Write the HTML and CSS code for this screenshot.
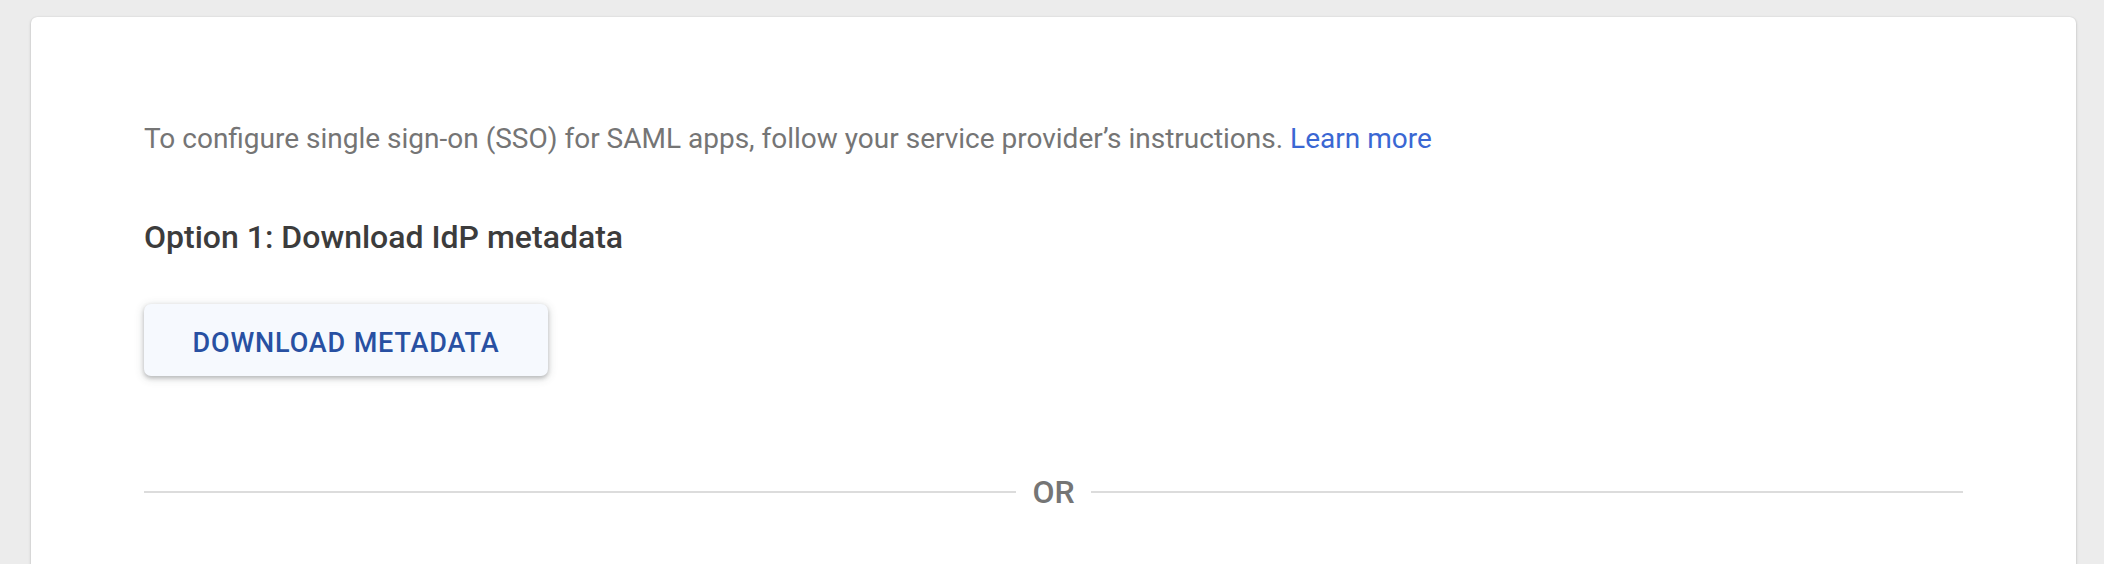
FILE: index.html
```html
<!DOCTYPE html>
<html lang="en">
<head>
<meta charset="utf-8">
<title>SAML app SSO</title>
<link rel="stylesheet" href="styles.css">
</head>
<body>
<main class="page">
  <section class="card">
    <p class="intro">To configure single sign-on (SSO) for SAML apps, follow your service provider’s instructions. <a class="link" href="#">Learn more</a></p>
    <h2 class="option-title">Option 1: Download IdP metadata</h2>
    <button class="btn" type="button"><span class="btn-label">DOWNLOAD METADATA</span></button>
    <div class="divider">
      <span class="divider-line"></span>
      <span class="divider-text">OR</span>
      <span class="divider-line"></span>
    </div>
  </section>
</main>
</body>
</html>
```

FILE: styles.css
```css
html, body {
  margin: 0;
  padding: 0;
  background: #ececec;
  font-family: Roboto, "Noto Sans", "Liberation Sans", sans-serif;
}

.page {
  padding: 17px 28px 0 31px;
  height: 564px;
  box-sizing: border-box;
  overflow: hidden;
}

.card {
  background: #ffffff;
  border-radius: 6px;
  box-shadow: 0 1px 3px rgba(0, 0, 0, 0.22), 0 0 1px rgba(0, 0, 0, 0.12);
  padding: 102px 113px 120px 113px;
  min-height: 600px;
  box-sizing: border-box;
}

.intro {
  margin: 0;
  font-size: 28px;
  line-height: 40px;
  color: #757575;
  white-space: nowrap;
}

.link {
  color: #3a67d3;
  text-decoration: none;
}

.option-title {
  margin: 58px 0 0 0;
  font-size: 32px;
  line-height: 40px;
  font-weight: 500;
  color: #3c3c3c;
}

.btn {
  margin-top: 47px;
  width: 404px;
  height: 72px;
  display: flex;
  align-items: center;
  justify-content: center;
  padding: 5px 0 0 0;
  border: none;
  border-radius: 7px;
  background: #f6f9fe;
  box-shadow: 0 2px 4px rgba(60, 64, 67, 0.3), 0 2px 8px 2px rgba(60, 64, 67, 0.12);
  font-family: inherit;
  cursor: pointer;
}

.btn-label {
  font-size: 27px;
  line-height: 40px;
  font-weight: 500;
  letter-spacing: 0.85px;
  color: #2850a2;
  white-space: nowrap;
}

.divider {
  margin-top: 96px;
  display: flex;
  align-items: center;
  height: 40px;
}

.divider-line {
  flex: 1;
  height: 2px;
  background: #dcdcdc;
}

.divider-text {
  font-size: 32px;
  line-height: 40px;
  font-weight: 500;
  color: #757575;
  margin: 0 16px;
}
```
